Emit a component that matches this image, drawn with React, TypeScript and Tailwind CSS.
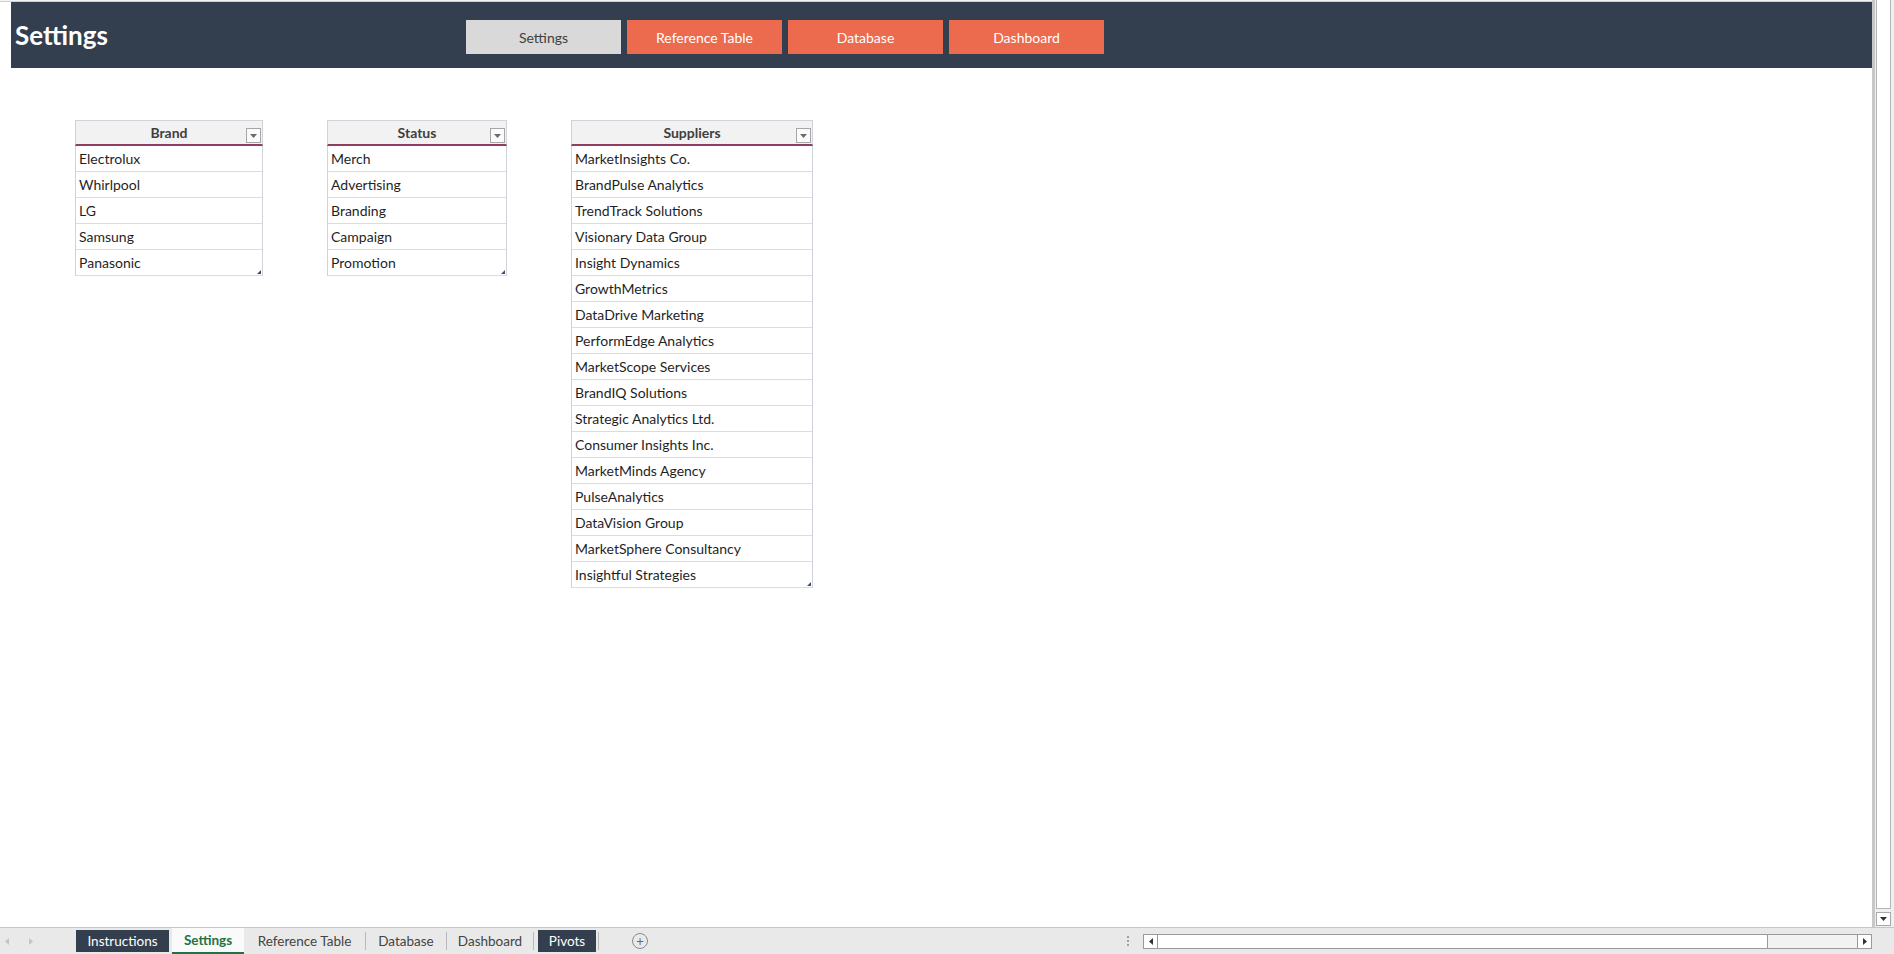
import type { ReactNode } from "react";

const brands = ["Electrolux", "Whirlpool", "LG", "Samsung", "Panasonic"];
const statuses = ["Merch", "Advertising", "Branding", "Campaign", "Promotion"];
const suppliers = [
  "MarketInsights Co.",
  "BrandPulse Analytics",
  "TrendTrack Solutions",
  "Visionary Data Group",
  "Insight Dynamics",
  "GrowthMetrics",
  "DataDrive Marketing",
  "PerformEdge Analytics",
  "MarketScope Services",
  "BrandIQ Solutions",
  "Strategic Analytics Ltd.",
  "Consumer Insights Inc.",
  "MarketMinds Agency",
  "PulseAnalytics",
  "DataVision Group",
  "MarketSphere Consultancy",
  "Insightful Strategies",
];

const font = { fontFamily: "Lato, 'Open Sans', sans-serif" };

export default function App() {
  return (
    <div
      className="flex h-[954px] w-[1894px] flex-col overflow-hidden bg-white text-[#222]"
      style={font}
    >
      <div className="flex min-h-0 flex-1">
        <div className="flex min-w-0 flex-1 flex-col">
          <div className="h-[2px] shrink-0 border-b border-[#d0d0d0] bg-[#f3f3f3]" />
          <div className="ml-[11px] flex h-[66px] shrink-0 items-start bg-[#333f4f]">
            <h1 className="ml-[4px] mt-[18px] w-[451px] text-[26px] font-bold leading-[30px] text-white">
              Settings
            </h1>
            <div className="mt-[18px] flex gap-[6px]">
              <NavButton active>Settings</NavButton>
              <NavButton>Reference Table</NavButton>
              <NavButton>Database</NavButton>
              <NavButton>Dashboard</NavButton>
            </div>
          </div>
          <div className="mt-[52px] flex items-start pl-[75px]">
            <ListTable title="Brand" items={brands} className="w-[188px]" />
            <ListTable title="Status" items={statuses} className="ml-[64px] w-[180px]" />
            <ListTable title="Suppliers" items={suppliers} className="ml-[64px] w-[242px]" />
          </div>
        </div>
        <VerticalScroll />
      </div>
      <TabBar />
    </div>
  );
}

function NavButton({ children, active }: { children: ReactNode; active?: boolean }) {
  return (
    <div
      className={
        active
          ? "flex h-[34px] w-[155px] items-center justify-center bg-[#d9d9d9] text-[14px] text-[#404040]"
          : "flex h-[34px] w-[155px] items-center justify-center bg-[#ec6a4d] text-[14px] text-white"
      }
    >
      {children}
    </div>
  );
}

function ListTable({
  title,
  items,
  className,
}: {
  title: string;
  items: string[];
  className: string;
}) {
  return (
    <div className={className}>
      <div className="relative flex h-[26px] items-center justify-center border border-b-2 border-[#cfd3da] border-b-[#8e3d63] bg-[#f2f2f2] text-[14px] font-bold text-[#404040]">
        {title}
        <div className="absolute bottom-[1px] right-[1px] flex h-[15px] w-[15px] items-center justify-center border border-[#a6a6a6] bg-[#fbfbfb]">
          <svg width="7" height="4" viewBox="0 0 7 4">
            <path d="M0 0h7L3.5 4z" fill="#6b6b6b" />
          </svg>
        </div>
      </div>
      <div className="border-x border-[#cfd3da]">
        {items.map((item, i) => (
          <div
            key={item}
            className="relative flex h-[26px] items-center border-b border-[#dcdcdc] pl-[3px] text-[14px] text-[#1f1f1f]"
          >
            {item}
            {i === items.length - 1 ? (
              <div className="absolute bottom-[1px] right-[1px] h-0 w-0 border-b-[4px] border-l-[4px] border-b-[#3f4b6b] border-l-transparent" />
            ) : null}
          </div>
        ))}
      </div>
    </div>
  );
}

function VerticalScroll() {
  return (
    <div className="flex w-[22px] shrink-0 flex-col border-l-[3px] border-[#c8c8c8] bg-[#f0f0f0] pl-[1px] pr-[3px]">
      <div className="flex-1 border-x border-b border-[#b5b5b5] bg-white" />
      <div className="mb-[1px] mt-[3px] flex h-[14px] items-center justify-center border border-[#a8a8a8] bg-white">
        <svg width="7" height="4" viewBox="0 0 7 4">
          <path d="M0 0h7L3.5 4z" fill="#333" />
        </svg>
      </div>
    </div>
  );
}

function TabBar() {
  return (
    <div className="flex h-[27px] shrink-0 items-center border-t border-[#c6c6c6] bg-[#e9e9e9] text-[13.5px]">
      <div className="flex w-[76px] items-center gap-[20px] pl-[5px]">
        <svg width="4" height="7" viewBox="0 0 4 7">
          <path d="M4 0v7L0 3.5z" fill="#c4c4c4" />
        </svg>
        <svg width="4" height="7" viewBox="0 0 4 7">
          <path d="M0 0v7L4 3.5z" fill="#c4c4c4" />
        </svg>
      </div>
      <div className="flex h-full items-stretch">
        <div className="my-[2px] flex w-[93px] items-center justify-center bg-[#333f4f] text-white">Instructions</div>
        <div className="ml-[3px] flex w-[72px] items-center justify-center border-b-2 border-[#217346] bg-[#fafafa] font-bold text-[#217346]">
          Settings
        </div>
        <div className="flex w-[121px] items-center justify-center text-[#444]">Reference Table</div>
        <div className="my-[4px] w-px bg-[#b9b9b9]" />
        <div className="flex w-[80px] items-center justify-center text-[#444]">Database</div>
        <div className="my-[4px] w-px bg-[#b9b9b9]" />
        <div className="flex w-[86px] items-center justify-center text-[#444]">Dashboard</div>
        <div className="my-[4px] w-px bg-[#b9b9b9]" />
        <div className="ml-[4px] my-[2px] flex w-[58px] items-center justify-center bg-[#333f4f] text-white">Pivots</div>
        <div className="my-[4px] ml-[2px] w-px bg-[#b9b9b9]" />
      </div>
      <div className="ml-[33px] flex h-[16px] w-[16px] items-center justify-center rounded-full border border-[#8a8a8a] text-[13px] leading-none text-[#666]">
        +
      </div>
      <div className="ml-auto flex items-center">
        <div className="mr-[14px] flex flex-col gap-[2px]">
          <span className="h-[2px] w-[2px] bg-[#a0a0a0]" />
          <span className="h-[2px] w-[2px] bg-[#a0a0a0]" />
          <span className="h-[2px] w-[2px] bg-[#a0a0a0]" />
        </div>
        <div className="flex h-[15px] w-[729px] items-stretch border border-[#9a9a9a] bg-[#f2f2f2]">
          <div className="flex w-[14px] items-center justify-center border-r border-[#9a9a9a] bg-white">
            <svg width="4" height="7" viewBox="0 0 4 7">
              <path d="M4 0v7L0 3.5z" fill="#333" />
            </svg>
          </div>
          <div className="w-[610px] border-r border-[#9a9a9a] bg-white" />
          <div className="flex-1" />
          <div className="flex w-[14px] items-center justify-center border-l border-[#9a9a9a] bg-white">
            <svg width="4" height="7" viewBox="0 0 4 7">
              <path d="M0 0v7L4 3.5z" fill="#333" />
            </svg>
          </div>
        </div>
        <div className="w-[22px]" />
      </div>
    </div>
  );
}
